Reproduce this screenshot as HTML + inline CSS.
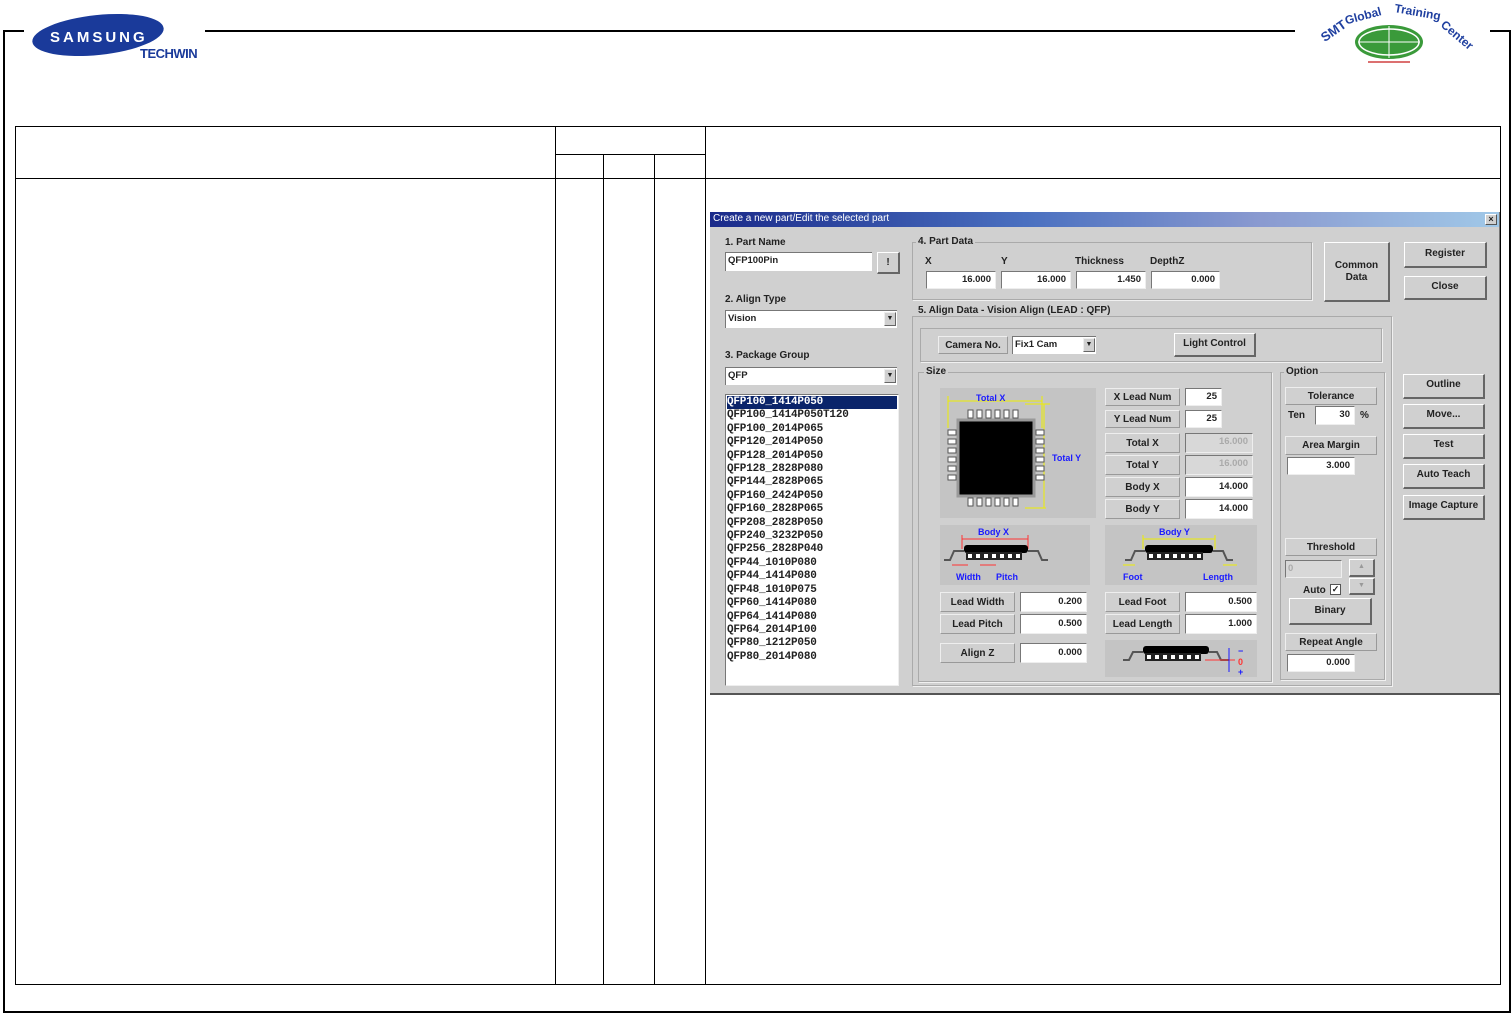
<!DOCTYPE html>
<html><head><meta charset="utf-8"><style>
body{margin:0;width:1512px;height:1014px;background:#fff;position:relative;overflow:hidden;font-family:"Liberation Sans",sans-serif}
.a{position:absolute}
.ln{position:absolute;background:#000}
#dlg{position:absolute;left:710px;top:212px;width:790px;height:483px;background:#d0d0d0;font-size:10px;font-weight:bold;color:#222;border-bottom:2px solid #555;border-right:1px solid #777;box-sizing:border-box}
#dlg div{position:absolute;box-sizing:border-box}
.t{white-space:nowrap;line-height:12px}
.inp{background:#fff;border-top:1px solid #777;border-left:1px solid #777;border-bottom:1px solid #eee;border-right:1px solid #eee;text-align:right;padding-right:4px;line-height:16px;font-size:9.5px}
.dis{background:#d8d8d8;color:#aaa}
.lab{background:#d0d0d0;border:1px solid #eee;border-right-color:#999;border-bottom-color:#999;text-align:center;line-height:17px;font-size:10px}
.btn{background:#d0d0d0;border:1px solid #fff;border-right:2px solid #666;border-bottom:2px solid #666;text-align:center;font-size:10px;line-height:20px}
.grp{border:1px solid #aaa;box-shadow:1px 1px 0 #f0f0f0}
.gl{background:#d0d0d0;padding:0 2px;line-height:11px}
.pan{background:#c4c4c4}
.combo{background:#fff;border-top:1px solid #777;border-left:1px solid #777;line-height:16px;padding-left:2px;font-size:9.5px;text-align:left}
.dd{right:1px;top:1px;width:12px;height:14px;background:#d0d0d0;border:1px solid #eee;border-right-color:#666;border-bottom-color:#666;font-size:7px;line-height:12px;text-align:center}
</style></head><body>
<div class="ln" style="left:3px;top:30px;width:21px;height:2px"></div>
<div class="ln" style="left:3px;top:30px;width:2px;height:983px"></div>
<div class="ln" style="left:205px;top:30px;width:1090px;height:2px"></div>
<div class="ln" style="left:1490px;top:30px;width:21px;height:2px"></div>
<div class="ln" style="left:1509px;top:30px;width:2px;height:983px"></div>
<div class="ln" style="left:3px;top:1011px;width:1508px;height:2px"></div>
<svg class="a" style="left:30px;top:12px" width="180" height="50"><ellipse cx="68" cy="23" rx="66" ry="20" fill="#1a3a9a" transform="rotate(-6 68 23)"/><text x="20" y="30" fill="#fff" font-family="Liberation Sans" font-weight="bold" font-size="15" letter-spacing="3">SAMSUNG</text><text x="110" y="46" fill="#1a3a9a" font-family="Liberation Sans" font-weight="bold" font-size="13" letter-spacing="-0.5">TECHWIN</text></svg>
<svg class="a" style="left:1318px;top:0" width="160" height="70"><text x="6" y="40" fill="#2040a0" font-family="Liberation Sans" font-weight="bold" font-size="13" transform="rotate(-35 10 40)">SMT</text><text x="28" y="24" fill="#2040a0" font-family="Liberation Sans" font-weight="bold" font-size="12" transform="rotate(-15 30 24)">Global</text><text x="76" y="12" fill="#2040a0" font-family="Liberation Sans" font-weight="bold" font-size="12" transform="rotate(10 76 12)">Training</text><text x="122" y="26" fill="#2040a0" font-family="Liberation Sans" font-weight="bold" font-size="12" transform="rotate(40 122 26)">Center</text><ellipse cx="71" cy="42" rx="34" ry="17" fill="#3a9a3a"/><ellipse cx="71" cy="42" rx="30" ry="13" fill="none" stroke="#fff" stroke-width="1.5"/><line x1="40" y1="42" x2="102" y2="42" stroke="#fff"/><line x1="71" y1="26" x2="71" y2="58" stroke="#fff"/><line x1="50" y1="62" x2="92" y2="62" stroke="#d04040" stroke-width="1.5"/></svg>
<div class="a" style="left:15px;top:126px;width:1486px;height:859px;border:1px solid #000;box-sizing:border-box"></div>
<div class="ln" style="left:15px;top:178px;width:1486px;height:1px"></div>
<div class="ln" style="left:555px;top:154px;width:150px;height:1px"></div>
<div class="ln" style="left:555px;top:126px;width:1px;height:859px"></div>
<div class="ln" style="left:603px;top:154px;width:1px;height:831px"></div>
<div class="ln" style="left:654px;top:154px;width:1px;height:831px"></div>
<div class="ln" style="left:705px;top:126px;width:1px;height:859px"></div>
<div id="dlg">
<div style="left:0;top:0;width:789px;height:15px;background:linear-gradient(90deg,#1a2a8a,#4a70c0 40%,#8a9ad0 70%,#a0c8e8)"></div>
<div class="t" style="left:3px;top:1px;color:#fff;font-weight:normal;font-size:10px">Create a new part/Edit the selected part</div>
<div style="left:775px;top:2px;width:12px;height:11px;background:#d0d0d0;border:1px solid #fff;border-right-color:#555;border-bottom-color:#555;font-size:9px;line-height:9px;text-align:center">×</div>
<div class="t" style="left:15px;top:25px">1. Part Name</div>
<div class="combo" style="left:15px;top:40px;width:147px;height:19px">QFP100Pin</div>
<div class="btn" style="left:167px;top:40px;width:23px;height:22px">!</div>
<div class="t" style="left:15px;top:82px">2. Align Type</div>
<div class="combo" style="left:15px;top:98px;width:172px;height:18px">Vision<div class="dd">▼</div></div>
<div class="t" style="left:15px;top:138px">3. Package Group</div>
<div class="combo" style="left:15px;top:155px;width:172px;height:18px">QFP<div class="dd">▼</div></div>
<div style="left:15px;top:182px;width:174px;height:292px;background:#fff;border:1px solid #777;border-right-color:#eee;border-bottom-color:#eee;font-family:'Liberation Mono',monospace;font-size:11px;line-height:13.4px;padding:1px;letter-spacing:-0.2px">
<div style="position:static;background:#0a246a;color:#fff">QFP100_1414P050</div>
<div style="position:static">QFP100_1414P050T120<br>QFP100_2014P065<br>QFP120_2014P050<br>QFP128_2014P050<br>QFP128_2828P080<br>QFP144_2828P065<br>QFP160_2424P050<br>QFP160_2828P065<br>QFP208_2828P050<br>QFP240_3232P050<br>QFP256_2828P040<br>QFP44_1010P080<br>QFP44_1414P080<br>QFP48_1010P075<br>QFP60_1414P080<br>QFP64_1414P080<br>QFP64_2014P100<br>QFP80_1212P050<br>QFP80_2014P080</div></div>
<div class="grp" style="left:202px;top:30px;width:400px;height:58px"></div>
<div class="t gl" style="left:206px;top:24px">4. Part Data</div>
<div class="t" style="left:215px;top:44px">X</div><div class="t" style="left:291px;top:44px">Y</div><div class="t" style="left:365px;top:44px">Thickness</div><div class="t" style="left:440px;top:44px">DepthZ</div>
<div class="inp" style="left:216px;top:59px;width:70px;height:18px">16.000</div>
<div class="inp" style="left:291px;top:59px;width:70px;height:18px">16.000</div>
<div class="inp" style="left:366px;top:59px;width:70px;height:18px">1.450</div>
<div class="inp" style="left:441px;top:59px;width:69px;height:18px">0.000</div>
<div class="btn" style="left:614px;top:30px;width:66px;height:60px;line-height:12px;padding-top:17px">Common<br>Data</div>
<div class="btn" style="left:694px;top:30px;width:83px;height:26px;line-height:22px">Register</div>
<div class="btn" style="left:694px;top:64px;width:83px;height:24px">Close</div>
<div class="grp" style="left:202px;top:104px;width:480px;height:370px"></div>
<div class="t gl" style="left:206px;top:93px">5. Align Data - Vision Align (LEAD : QFP)</div>
<div class="grp" style="left:210px;top:116px;width:462px;height:34px"></div>
<div class="lab" style="left:228px;top:124px;width:70px;height:18px">Camera No.</div>
<div class="combo" style="left:302px;top:124px;width:84px;height:18px">Fix1 Cam<div class="dd">▼</div></div>
<div class="btn" style="left:464px;top:121px;width:82px;height:24px">Light Control</div>
<div class="grp" style="left:208px;top:160px;width:354px;height:310px"></div>
<div class="t gl" style="left:214px;top:154px">Size</div>
<div class="pan" style="left:230px;top:176px;width:156px;height:130px"></div>
<svg class="a" style="left:230px;top:176px" width="160" height="130">
<line x1="8" y1="13" x2="102" y2="13" stroke="#ee0" /><line x1="8" y1="8" x2="8" y2="40" stroke="#ee0"/><line x1="102" y1="8" x2="102" y2="40" stroke="#ee0"/>
<line x1="104" y1="16" x2="104" y2="120" stroke="#ee0"/><line x1="85" y1="120" x2="106" y2="120" stroke="#ee0"/><line x1="85" y1="16" x2="110" y2="16" stroke="#ee0"/>
<text x="36" y="13" fill="#1a1aff" font-size="9" font-weight="bold" font-family="Liberation Sans">Total X</text>
<text x="112" y="73" fill="#1a1aff" font-size="9" font-weight="bold" font-family="Liberation Sans">Total Y</text>
<rect x="18" y="32" width="76" height="76" fill="#000" stroke="#999" stroke-width="3"/>
<g fill="#fff" stroke="#555" stroke-width="1">
<rect x="28" y="22" width="5" height="8"/><rect x="37" y="22" width="5" height="8"/><rect x="46" y="22" width="5" height="8"/><rect x="55" y="22" width="5" height="8"/><rect x="64" y="22" width="5" height="8"/><rect x="73" y="22" width="5" height="8"/>
<rect x="28" y="110" width="5" height="8"/><rect x="37" y="110" width="5" height="8"/><rect x="46" y="110" width="5" height="8"/><rect x="55" y="110" width="5" height="8"/><rect x="64" y="110" width="5" height="8"/><rect x="73" y="110" width="5" height="8"/>
<rect x="8" y="42" width="8" height="5"/><rect x="8" y="51" width="8" height="5"/><rect x="8" y="60" width="8" height="5"/><rect x="8" y="69" width="8" height="5"/><rect x="8" y="78" width="8" height="5"/><rect x="8" y="87" width="8" height="5"/>
<rect x="96" y="42" width="8" height="5"/><rect x="96" y="51" width="8" height="5"/><rect x="96" y="60" width="8" height="5"/><rect x="96" y="69" width="8" height="5"/><rect x="96" y="78" width="8" height="5"/><rect x="96" y="87" width="8" height="5"/></g>
</svg>
<div class="lab" style="left:395px;top:176px;width:75px;height:18px">X Lead Num</div><div class="inp" style="left:475px;top:176px;width:37px;height:18px">25</div>
<div class="lab" style="left:395px;top:198px;width:75px;height:18px">Y Lead Num</div><div class="inp" style="left:475px;top:198px;width:37px;height:18px">25</div>
<div class="lab" style="left:395px;top:221px;width:75px;height:20px;line-height:19px">Total X</div><div class="inp dis" style="left:475px;top:221px;width:68px;height:20px">16.000</div>
<div class="lab" style="left:395px;top:243px;width:75px;height:20px;line-height:19px">Total Y</div><div class="inp dis" style="left:475px;top:243px;width:68px;height:20px">16.000</div>
<div class="lab" style="left:395px;top:265px;width:75px;height:20px;line-height:19px">Body X</div><div class="inp" style="left:475px;top:265px;width:68px;height:20px;line-height:18px">14.000</div>
<div class="lab" style="left:395px;top:287px;width:75px;height:20px;line-height:19px">Body Y</div><div class="inp" style="left:475px;top:287px;width:68px;height:20px;line-height:18px">14.000</div>
<div class="pan" style="left:230px;top:313px;width:150px;height:60px"></div>
<svg class="a" style="left:230px;top:313px" width="150" height="60">
<text x="38" y="10" fill="#1a1aff" font-size="9" font-weight="bold" font-family="Liberation Sans">Body X</text>
<line x1="22" y1="14" x2="88" y2="14" stroke="#f33"/><line x1="22" y1="10" x2="22" y2="24" stroke="#f33"/><line x1="88" y1="10" x2="88" y2="24" stroke="#f33"/>
<rect x="24" y="20" width="64" height="8" rx="3" fill="#000"/>
<g fill="#fff" stroke="#222" stroke-width="2"><rect x="27" y="28" width="6" height="6"/><rect x="35" y="28" width="6" height="6"/><rect x="43" y="28" width="6" height="6"/><rect x="51" y="28" width="6" height="6"/><rect x="59" y="28" width="6" height="6"/><rect x="67" y="28" width="6" height="6"/><rect x="75" y="28" width="6" height="6"/></g>
<path d="M24 26 L14 26 L10 35 L4 35 M88 26 L98 26 L102 35 L108 35" stroke="#555" fill="none" stroke-width="2"/>
<line x1="12" y1="40" x2="28" y2="40" stroke="#f33"/><line x1="40" y1="40" x2="56" y2="40" stroke="#f33"/>
<text x="16" y="55" fill="#1a1aff" font-size="9" font-weight="bold" font-family="Liberation Sans">Width</text><text x="56" y="55" fill="#1a1aff" font-size="9" font-weight="bold" font-family="Liberation Sans">Pitch</text></svg>
<div class="pan" style="left:395px;top:313px;width:152px;height:60px"></div>
<svg class="a" style="left:395px;top:313px" width="152" height="60">
<text x="54" y="10" fill="#1a1aff" font-size="9" font-weight="bold" font-family="Liberation Sans">Body Y</text>
<line x1="38" y1="14" x2="110" y2="14" stroke="#ee0"/><line x1="38" y1="10" x2="38" y2="24" stroke="#ee0"/><line x1="110" y1="10" x2="110" y2="24" stroke="#ee0"/>
<rect x="40" y="20" width="68" height="8" rx="3" fill="#000"/>
<g fill="#fff" stroke="#222" stroke-width="2"><rect x="43" y="28" width="6" height="6"/><rect x="51" y="28" width="6" height="6"/><rect x="59" y="28" width="6" height="6"/><rect x="67" y="28" width="6" height="6"/><rect x="75" y="28" width="6" height="6"/><rect x="83" y="28" width="6" height="6"/><rect x="91" y="28" width="6" height="6"/></g>
<path d="M40 26 L30 26 L26 35 L20 35 M108 26 L118 26 L122 35 L128 35" stroke="#555" fill="none" stroke-width="2"/>
<line x1="18" y1="40" x2="30" y2="40" stroke="#ee0"/><line x1="118" y1="40" x2="132" y2="40" stroke="#ee0"/>
<text x="18" y="55" fill="#1a1aff" font-size="9" font-weight="bold" font-family="Liberation Sans">Foot</text><text x="98" y="55" fill="#1a1aff" font-size="9" font-weight="bold" font-family="Liberation Sans">Length</text></svg>
<div class="lab" style="left:230px;top:380px;width:75px;height:20px;line-height:19px">Lead Width</div><div class="inp" style="left:310px;top:380px;width:67px;height:20px;line-height:18px">0.200</div>
<div class="lab" style="left:230px;top:402px;width:75px;height:20px;line-height:19px">Lead Pitch</div><div class="inp" style="left:310px;top:402px;width:67px;height:20px;line-height:18px">0.500</div>
<div class="lab" style="left:230px;top:431px;width:75px;height:20px;line-height:19px">Align Z</div><div class="inp" style="left:310px;top:431px;width:67px;height:20px;line-height:18px">0.000</div>
<div class="lab" style="left:395px;top:380px;width:75px;height:20px;line-height:19px">Lead Foot</div><div class="inp" style="left:475px;top:380px;width:72px;height:20px;line-height:18px">0.500</div>
<div class="lab" style="left:395px;top:402px;width:75px;height:20px;line-height:19px">Lead Length</div><div class="inp" style="left:475px;top:402px;width:72px;height:20px;line-height:18px">1.000</div>
<div class="pan" style="left:395px;top:428px;width:152px;height:37px"></div>
<svg class="a" style="left:395px;top:428px" width="152" height="37">
<rect x="38" y="6" width="66" height="8" rx="3" fill="#000"/>
<g fill="#fff" stroke="#222" stroke-width="2"><rect x="41" y="14" width="6" height="6"/><rect x="49" y="14" width="6" height="6"/><rect x="57" y="14" width="6" height="6"/><rect x="65" y="14" width="6" height="6"/><rect x="73" y="14" width="6" height="6"/><rect x="81" y="14" width="6" height="6"/><rect x="89" y="14" width="6" height="6"/></g>
<path d="M38 12 L28 12 L24 20 L18 20 M104 12 L112 12 L116 20 L124 20" stroke="#555" fill="none" stroke-width="2"/>
<line x1="100" y1="20" x2="130" y2="20" stroke="#f33"/><line x1="124" y1="8" x2="124" y2="32" stroke="#1a1aff"/>
<text x="133" y="14" fill="#1a1aff" font-size="9" font-weight="bold">−</text><text x="133" y="25" fill="#f33" font-size="9" font-weight="bold">0</text><text x="133" y="35" fill="#1a1aff" font-size="9" font-weight="bold">+</text></svg>
<div class="grp" style="left:570px;top:160px;width:105px;height:308px"></div>
<div class="t gl" style="left:574px;top:154px">Option</div>
<div class="lab" style="left:575px;top:175px;width:92px;height:18px">Tolerance</div>
<div class="t" style="left:578px;top:198px">Ten</div>
<div class="inp" style="left:605px;top:194px;width:40px;height:19px">30</div>
<div class="t" style="left:650px;top:198px">%</div>
<div class="lab" style="left:575px;top:224px;width:92px;height:19px">Area Margin</div>
<div class="inp" style="left:577px;top:245px;width:68px;height:18px">3.000</div>
<div class="lab" style="left:575px;top:326px;width:92px;height:18px">Threshold</div>
<div class="inp dis" style="left:575px;top:348px;width:57px;height:18px;text-align:left;padding-left:2px">0</div>
<div class="btn" style="left:639px;top:347px;width:26px;height:18px;line-height:14px;font-size:7px;color:#999">▲</div>
<div class="btn" style="left:639px;top:366px;width:26px;height:17px;line-height:13px;font-size:7px;color:#999">▼</div>
<div class="t" style="left:593px;top:373px">Auto</div>
<div style="left:620px;top:372px;width:11px;height:11px;background:#fff;border:1px solid #555;font-size:9px;line-height:9px;text-align:center">✓</div>
<div class="btn" style="left:579px;top:386px;width:83px;height:27px;line-height:24px">Binary</div>
<div class="lab" style="left:575px;top:421px;width:92px;height:18px">Repeat Angle</div>
<div class="inp" style="left:577px;top:442px;width:68px;height:18px">0.000</div>
<div class="btn" style="left:693px;top:162px;width:82px;height:25px">Outline</div>
<div class="btn" style="left:693px;top:192px;width:82px;height:25px">Move...</div>
<div class="btn" style="left:693px;top:222px;width:82px;height:25px">Test</div>
<div class="btn" style="left:693px;top:252px;width:82px;height:25px">Auto Teach</div>
<div class="btn" style="left:693px;top:283px;width:82px;height:25px">Image Capture</div>
</div>
</body></html>
